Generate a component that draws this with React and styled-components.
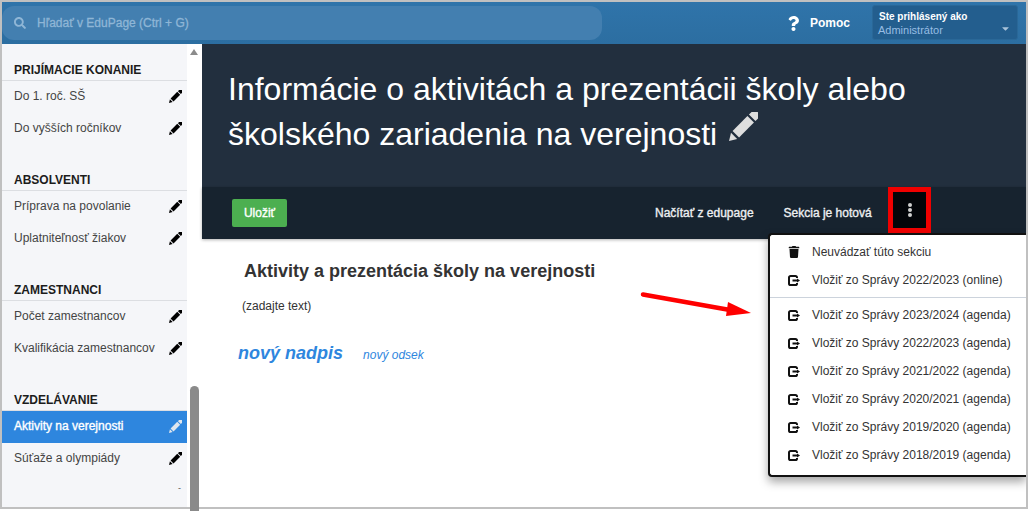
import React from 'react';
import styled, { createGlobalStyle } from 'styled-components';
import { FaSearch, FaQuestion, FaTrash, FaCaretDown } from 'react-icons/fa';

const GlobalStyle = createGlobalStyle`
    html, body {
        margin: 0;
        padding: 0;
        background: #fff;
        overflow: hidden;
    }
    * {
        box-sizing: border-box;
    }
    #root {
        width: 1028px;
        height: 511px;
        font-family: 'Liberation Sans', Arial, sans-serif;
    }
`;

const Frame = styled.div`
    position: relative;
    width: 1028px;
    height: 509px;
    border: 2px solid #c0c0c0;
    display: flex;
    flex-direction: column;
    overflow: hidden;
    background: #fff;
`;

const TopBar = styled.header`
    height: 42px;
    flex: none;
    display: flex;
    align-items: center;
    background: linear-gradient(#2f74aa, #2c6ea1);
`;

const SearchBox = styled.div`
    width: 600px;
    height: 34px;
    margin-right: 176px;
    border-radius: 12px;
    background: #437fb0;
    display: flex;
    align-items: center;
    padding-left: 12px;
    color: #8fb6d6;
    font-size: 12px;
    -webkit-text-stroke: 0.3px currentColor;
    gap: 11px;
`;

const HelpLink = styled.div`
    display: flex;
    align-items: center;
    width: 94px;
    padding-left: 8px;
    gap: 9px;
    color: #fff;
    font-weight: bold;
    font-size: 12px;
`;

const UserBox = styled.div`
    position: relative;
    width: 146px;
    height: 35px;
    margin-top: -2px;
    padding: 4px 5px;
    border-radius: 3px;
    background: #235e8e;
    border: 1px solid #2a6898;
    line-height: 14px;
`;

const UserTitle = styled.div`
    color: #fff;
    font-weight: bold;
    font-size: 10px;
    padding-left: 1px;
`;

const UserName = styled.div`
    margin-top: -1px;
    color: #97bde3;
    font-size: 11px;
`;

const UserCaret = styled.span`
    position: absolute;
    right: 6px;
    bottom: 2px;
    color: #a9c3da;
    font-size: 11px;
`;

const Body = styled.div`
    flex: 1;
    display: flex;
    min-height: 0;
`;

const Sidebar = styled.aside`
    width: 185px;
    flex: none;
    background: #f5f6f9;
`;

const Group = styled.section`
    margin-top: 9px;
    &:first-child {
        margin-top: 0;
    }
`;

const GroupTitle = styled.h4`
    margin: 0;
    height: 37px;
    padding: 0 0 2px 12px;
    display: flex;
    align-items: flex-end;
    border-bottom: 1px solid #dcdee2;
    font-size: 12px;
    line-height: 15px;
    font-weight: bold;
    color: #1c1c1c;
`;

const NavItem = styled.div`
    height: 32px;
    display: flex;
    align-items: center;
    justify-content: space-between;
    padding: 0 5px 2px 12px;
    font-size: 12px;
    color: ${(p) => (p.$active ? '#fff' : '#444')};
    -webkit-text-stroke: ${(p) => (p.$active ? '0.35px #fff' : '0')};
    background: ${(p) => (p.$active ? '#2e86de' : 'transparent')};
    svg {
        width: 13px;
        height: 13px;
        color: ${(p) => (p.$active ? '#dfe6ee' : '#000')};
    }
`;

const Dash = styled.div`
    padding: 9px 0 0 176px;
    font-size: 9px;
    line-height: 9px;
    color: #555;
`;

const ScrollTrack = styled.div`
    width: 15px;
    flex: none;
    background: #fff;
`;

const ScrollUp = styled.span`
    position: absolute;
    left: 188px;
    top: 47px;
    border-left: 4.5px solid transparent;
    border-right: 4.5px solid transparent;
    border-bottom: 6px solid #8c8c8c;
`;

const ScrollThumb = styled.div`
    position: absolute;
    left: 190px;
    top: 386px;
    width: 9px;
    height: 125px;
    border-radius: 5px 5px 0 0;
    background: #8a8a8a;
`;

const Main = styled.main`
    flex: 1;
    min-width: 0;
`;

const Hero = styled.div`
    height: 143px;
    padding: 23px 26px 0;
    background: #222f3e;
    color: #fff;
    font-size: 32px;
    line-height: 45px;
    svg {
        width: 29px;
        height: 29px;
        color: #dedede;
        margin-left: 12px;
        vertical-align: 4px;
    }
`;

const ActionBar = styled.div`
    height: 52px;
    display: flex;
    align-items: center;
    padding-left: 30px;
    background: #17232f;
    box-shadow: 0 1px 3px rgba(0, 0, 0, 0.3);
    font-size: 12px;
    color: #eef0f2;
    -webkit-text-stroke: 0.35px currentColor;
`;

const SaveButton = styled.button`
    width: 55px;
    height: 28px;
    margin-right: 368px;
    padding: 0;
    border: 0;
    border-radius: 2px;
    background: #4caf50;
    color: #fff;
    font: 12px 'Liberation Sans', Arial, sans-serif;
    -webkit-text-stroke: 0.35px #fff;
`;

const ActionLink = styled.span`
    margin-right: 30px;
`;

const MoreDots = styled.span`
    width: 4px;
    height: 14px;
    display: flex;
    flex-direction: column;
    justify-content: space-between;
    i {
        width: 4px;
        height: 4px;
        border-radius: 50%;
        background: #d0d0d0;
    }
`;

const Content = styled.div`
    position: relative;
    padding: 22px 0 0 42px;
    color: #333;
`;

const SectionTitle = styled.h2`
    margin: 0;
    font-size: 18px;
    line-height: 20px;
    font-weight: bold;
`;

const Hint = styled.p`
    margin: 18px 0 0 -2px;
    font-size: 12px;
    line-height: 15px;
`;

const AddRow = styled.div`
    display: flex;
    align-items: baseline;
    gap: 20px;
    margin: 29px 0 0 -6px;
    color: #2e86de;
    font-style: italic;
`;

const AddHeading = styled.span`
    font-size: 18px;
    font-weight: bold;
`;

const AddParagraph = styled.span`
    font-size: 12px;
`;

const Highlight = styled.div`
    position: absolute;
    left: 886px;
    top: 185px;
    width: 43px;
    height: 46px;
    border: 5px solid #f00000;
    background: #030509;
    display: flex;
    align-items: center;
    justify-content: center;
`;

const Arrow = styled.svg`
    position: absolute;
    left: 636px;
    top: 288px;
`;

const Menu = styled.div`
    position: absolute;
    left: 766px;
    top: 231px;
    width: 258px;
    height: 244px;
    padding: 3px 0;
    background: #fff;
    border: 2px solid #111;
    border-right: 0;
    border-radius: 4px 0 0 4px;
    box-shadow: 0 5px 10px rgba(0, 0, 0, 0.35);
`;

const MenuItem = styled.div`
    height: 28px;
    display: flex;
    align-items: center;
    gap: 12px;
    padding-left: 18px;
    font-size: 12px;
    color: #333;
    svg {
        flex: none;
        width: 12px;
    }
`;

const MenuDivider = styled.div`
    height: 1px;
    margin: 3px 0;
    background: #ccd3dc;
`;

const groups = [
    { title: 'PRIJÍMACIE KONANIE', items: ['Do 1. roč. SŠ', 'Do vyšších ročníkov'] },
    { title: 'ABSOLVENTI', items: ['Príprava na povolanie', 'Uplatniteľnosť žiakov'] },
    { title: 'ZAMESTNANCI', items: ['Počet zamestnancov', 'Kvalifikácia zamestnancov'] },
    { title: 'VZDELÁVANIE', items: ['Aktivity na verejnosti', 'Súťaže a olympiády'] },
];

const agendaYears = ['2023/2024', '2022/2023', '2021/2022', '2020/2021', '2019/2020', '2018/2019'];

// tilted pencil: eraser, body and tip are separate shapes with small gaps
const PencilIcon = () => (
    <svg viewBox="0 0 24 24" fill="currentColor">
        <g transform="rotate(45 12 12)">
            <path d="M8.2 1.8V-1a3.8 3.8 0 0 1 7.6 0v2.8z" />
            <rect x="8.2" y="3.6" width="7.6" height="17.4" />
            <path d="M8.4 23h7.2l-3.6 6z" />
        </g>
    </svg>
);

const ImportIcon = () => (
    <svg viewBox="0 0 12 11" height="11" fill="none" stroke="#111">
        <path d="M9 3V2.6A1.6 1.6 0 0 0 7.4 1H2.6A1.6 1.6 0 0 0 1 2.6v5.8A1.6 1.6 0 0 0 2.6 10h4.8A1.6 1.6 0 0 0 9 8.4V8" strokeWidth="2" />
        <path d="M4.5 5.5H9" strokeWidth="2" />
        <path d="M9 3.4L12 5.5L9 7.6z" fill="#111" stroke="none" />
    </svg>
);

const App = () => {
    return (
        <>
            <GlobalStyle />
            <Frame>
                <TopBar>
                    <SearchBox>
                        <FaSearch size={12} />
                        Hľadať v EduPage (Ctrl + G)
                    </SearchBox>
                    <HelpLink>
                        <FaQuestion size={15} />
                        Pomoc
                    </HelpLink>
                    <UserBox>
                        <UserTitle>Ste prihlásený ako</UserTitle>
                        <UserName>Administrátor</UserName>
                        <UserCaret>
                            <FaCaretDown />
                        </UserCaret>
                    </UserBox>
                </TopBar>
                <Body>
                    <Sidebar>
                        {groups.map((group) => (
                            <Group key={group.title}>
                                <GroupTitle>{group.title}</GroupTitle>
                                {group.items.map((item) => (
                                    <NavItem key={item} $active={item === 'Aktivity na verejnosti'}>
                                        {item}
                                        <PencilIcon />
                                    </NavItem>
                                ))}
                            </Group>
                        ))}
                        <Dash>-</Dash>
                    </Sidebar>
                    <ScrollTrack />
                    <Main>
                        <Hero>
                            Informácie o aktivitách a prezentácii školy alebo
                            <br />
                            školského zariadenia na verejnosti
                            <PencilIcon />
                        </Hero>
                        <ActionBar>
                            <SaveButton>Uložiť</SaveButton>
                            <ActionLink>Načítať z edupage</ActionLink>
                            <ActionLink>Sekcia je hotová</ActionLink>
                        </ActionBar>
                        <Content>
                            <SectionTitle>Aktivity a prezentácia školy na verejnosti</SectionTitle>
                            <Hint>(zadajte text)</Hint>
                            <AddRow>
                                <AddHeading>nový nadpis</AddHeading>
                                <AddParagraph>nový odsek</AddParagraph>
                            </AddRow>
                        </Content>
                    </Main>
                </Body>
                <ScrollUp />
                <Highlight>
                    <MoreDots>
                        <i />
                        <i />
                        <i />
                    </MoreDots>
                </Highlight>
                <Arrow width="120" height="34" viewBox="0 0 120 34">
                    <path d="M5 4.5L92 20" stroke="#f00" strokeWidth="4.5" strokeLinecap="round" />
                    <path d="M90 12L88 26L113 23z" fill="#f00" />
                </Arrow>
                <Menu>
                    <MenuItem>
                        <FaTrash size={12} color="#111" />
                        Neuvádzať túto sekciu
                    </MenuItem>
                    <MenuItem>
                        <ImportIcon />
                        Vložiť zo Správy 2022/2023 (online)
                    </MenuItem>
                    <MenuDivider />
                    {agendaYears.map((year) => (
                        <MenuItem key={year}>
                            <ImportIcon />
                            Vložiť zo Správy {year} (agenda)
                        </MenuItem>
                    ))}
                </Menu>
            </Frame>
            <ScrollThumb />
        </>
    );
};

export default App;
